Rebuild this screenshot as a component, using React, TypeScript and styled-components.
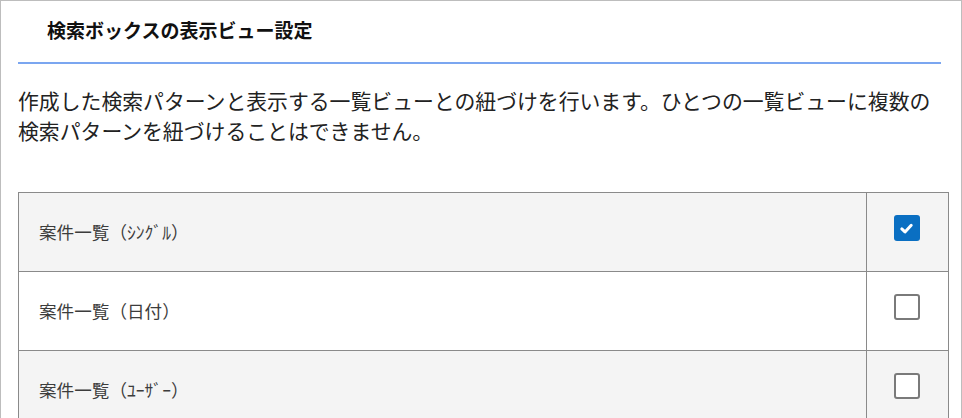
import styled, { createGlobalStyle } from "styled-components";

const GlobalStyle = createGlobalStyle`
    html, body {
        margin: 0;
        padding: 0;
        background: #ffffff;
    }
    body {
        font-family: "Noto Sans CJK JP", "Noto Sans", sans-serif;
        color: #222;
    }
`;

const Frame = styled.div`
    width: 962px;
    height: 430px;
    box-sizing: border-box;
    border: 1px solid #bdbdbd;
    border-bottom: none;
    padding: 0 20px 0 17px;
    overflow: hidden;
`;

const Header = styled.div`
    width: 923px;
    height: 63px;
    box-sizing: border-box;
    border-bottom: 2px solid #7ba6f0;
    display: flex;
    align-items: center;
    padding: 0 0 4px 29px;
`;

const Title = styled.h1`
    margin: 0;
    font-size: 19px;
    font-weight: 700;
    color: #111;
`;

const Desc = styled.p`
    width: 923px;
    margin: 21px 0 0 0;
    font-size: 20.85px;
    line-height: 30px;
    color: #222;
`;

const Table = styled.div`
    width: 929px;
    margin-top: 47px;
    border: 1px solid #8a8a8a;
    border-bottom: none;
`;

const Row = styled.div<{ $shaded?: boolean }>`
    display: grid;
    grid-template-columns: 1fr 82px;
    height: 78px;
    background: ${(p) => (p.$shaded ? "#f4f4f4" : "#ffffff")};
    border-bottom: 1px solid #8a8a8a;
`;

const Label = styled.div`
    display: flex;
    align-items: center;
    padding-left: 20px;
    padding-bottom: 2px;
    font-size: 17.6px;
    color: #3c3c3c;
`;

const CheckCell = styled.div`
    display: flex;
    align-items: center;
    justify-content: center;
    padding: 0 2px 8px 0;
    border-left: 1px solid #8a8a8a;
`;

const Box = styled.div<{ $checked?: boolean }>`
    width: 26px;
    height: 26px;
    box-sizing: border-box;
    border-radius: 3px;
    display: flex;
    align-items: center;
    justify-content: center;
    background: ${(p) => (p.$checked ? "#0a6fc2" : "#ffffff")};
    border: ${(p) => (p.$checked ? "none" : "2px solid #7a7a7a")};
`;

const rows = [
  { label: "案件一覧（ｼﾝｸﾞﾙ）", checked: true },
  { label: "案件一覧（日付）", checked: false },
  { label: "案件一覧（ﾕｰｻﾞｰ）", checked: false },
];

const App = () => {
  return (
    <>
      <GlobalStyle />
      <Frame>
        <Header>
          <Title>検索ボックスの表示ビュー設定</Title>
        </Header>
        <Desc>
          作成した検索パターンと表示する一覧ビューとの紐づけを行います。ひとつの一覧ビューに複数の検索パターンを紐づけることはできません。
        </Desc>
        <Table>
          {rows.map((r, i) => (
            <Row key={i} $shaded={i % 2 === 0}>
              <Label>{r.label}</Label>
              <CheckCell>
                <Box $checked={r.checked}>
                  {r.checked && (
                    <svg width="15" height="15" viewBox="0 0 14 14">
                      <path d="M2.6 7.4 L5.6 10.2 L11.4 4" fill="none" stroke="#fff" strokeWidth="2.8" strokeLinecap="round" strokeLinejoin="round" />
                    </svg>
                  )}
                </Box>
              </CheckCell>
            </Row>
          ))}
        </Table>
      </Frame>
    </>
  );
};

export default App;
